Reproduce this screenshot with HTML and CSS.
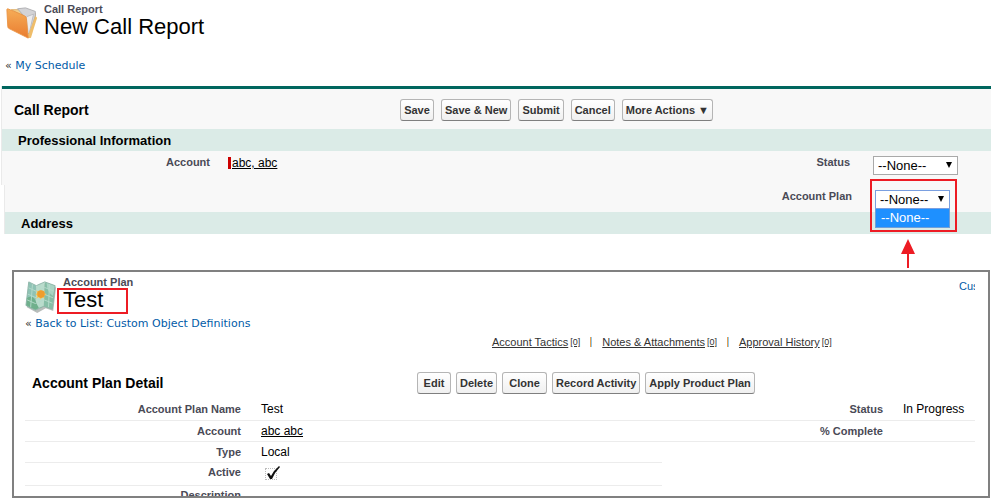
FILE: index.html
```html
<!doctype html>
<html lang="en">
<head>
<meta charset="UTF-8">
<title>New Call Report</title>
<meta name="viewport" content="width=device-width,initial-scale=1">
<link rel="stylesheet" href="styles.css">
</head>

<body>
<header class="page_title">
 <svg class="icon" width="32" height="32" viewBox="0 0 36 36" aria-hidden="true">
  <defs>
   <linearGradient id="folder" x1="0" y1="0" x2="0" y2="1">
    <stop offset="0" stop-color="#f6ad57"/>
    <stop offset="1" stop-color="#e97c30"/>
   </linearGradient>
  </defs>
  <path d="M6 3 L14 3 L33 7 L33 10 L27 34 L24 34 L20 10 Z" fill="#f3cf8d" stroke="#dcae66" stroke-width="1"/>
  <path d="M13 2 L22 1 L33 5 L33 10 L27 29 L23 31 L20 10 Z" fill="#d3d3d6" stroke="#aaaaae" stroke-width="1"/>
  <path d="M23 11 L31 8 L26 30" fill="#ececee" stroke="#b9b9bd" stroke-width="1"/>
  <path d="M33 10 L35 12 L28 35 L24 34 Z" fill="#efbd6a"/>
  <path d="M1 3 Q1 2 2 2 L21 10 Q23 11 23 13 L25 35 L3 24 Q2 23 2 22 Z" fill="url(#folder)" stroke="#e99242" stroke-width="1"/>
 </svg>
 <div>
  <p class="type">Call Report</p>
  <h1>New Call Report</h1>
 </div>
</header>
<p class="back_link">« <a href="#">My Schedule</a></p>

<form class="edit_page" onsubmit="return false">
 <div class="part">
  <div class="toolbar">
   <h2>Call Report</h2>
   <div class="buttons">
    <button>Save</button>
    <button>Save &amp; New</button>
    <button>Submit</button>
    <button>Cancel</button>
    <button>More Actions ▼</button>
   </div>
  </div>
  <h3>Professional Information</h3>
  <div class="fields">
   <span class="label">Account</span>
   <span class="value required"><a href="#">abc, abc</a></span>
   <label class="label" for="status">Status</label>
   <span class="picklist">
    <select id="status"><option>--None--</option></select>
   </span>
  </div>
 </div>

 <div class="part lower">
  <div class="fields">
   <label class="label plan" for="account_plan">Account Plan</label>
   <span class="picklist open">
    <select id="account_plan"><option>--None--</option></select>
    <span class="options">--None--</span>
    <span class="marker"></span>
    <svg class="arrow" width="16" height="30" viewBox="0 0 16 30" aria-hidden="true">
     <path d="M8 0 L15 15 H9 V29 H7 V15 H1 Z" fill="#ed1c24"/>
    </svg>
   </span>
  </div>
  <h3>Address</h3>
 </div>
</form>

<main class="detail_page">
 <header class="page_title">
  <svg class="icon" width="32" height="34" viewBox="0 0 34 36" aria-hidden="true">
   <path d="M5 5 L13 9 L22 4 L33 9 L30 34 L22 31 L13 36 L2 30 Z" fill="#b9bdbb"/>
   <path d="M4 3 L12 7 L11 33 L1 28 Z" fill="#8fc3b5"/>
   <path d="M12 7 L21 3 L20 29 L11 33 Z" fill="#b9dccc"/>
   <path d="M21 3 L32 7 L29 32 L20 29 Z" fill="#86bea6"/>
   <path d="M2 20 Q9 16 12 25 T19 29 L11 33 L1 28 Z" fill="#6fb08c"/>
   <path d="M23 4 Q23 14 30 18 L32 7 Z" fill="#a9d4c4"/>
   <path d="M3 9 L12 13 L21 9 L31 13 M3 16 L12 20 L20 16 L30 20 M2 22 L11 26 L20 22 L30 26 M8 5 L6 30 M16 5 L15 31 M26 5 L25 30" fill="none" stroke="#b5dacb" stroke-width="1"/>
   <path d="M4 3 L12 7 L21 3 L32 7 L29 32 L20 29 L11 33 L1 28 Z" fill="none" stroke="#8fb5a9" stroke-width="1"/>
   <path d="M17 11 L18 14 L21 12 L20 15 L23 16 L20 18 L21 21 L18 19 L17 22 L15 19 L12 21 L13 18 L11 16 L13 15 L12 12 L15 14 Z" fill="#f5c65b"/>
   <circle cx="17" cy="16" r="4" fill="#ef9d2c"/>
  </svg>
  <div>
   <p class="type">Account Plan</p>
   <h1><span class="marked">Test</span></h1>
  </div>
  <a class="customize" href="#">Cus</a>
 </header>
 <p class="back_link">« <a href="#">Back to List: Custom Object Definitions</a></p>

 <nav class="related">
  <a href="#">Account Tactics</a><a class="count" href="#">[0]</a>
  <i></i>
  <a href="#">Notes &amp; Attachments</a><a class="count" href="#">[0]</a>
  <i></i>
  <a href="#">Approval History</a><a class="count" href="#">[0]</a>
 </nav>

 <div class="toolbar">
  <h2>Account Plan Detail</h2>
  <div class="buttons">
   <button>Edit</button>
   <button>Delete</button>
   <button class="wide">Clone</button>
   <button>Record Activity</button>
   <button>Apply Product Plan</button>
  </div>
 </div>

 <table>
  <colgroup><col class="c_label"><col><col class="c_label2"><col class="c_value"></colgroup>
  <tr><th>Account Plan Name</th><td>Test</td><th>Status</th><td>In Progress</td></tr>
  <tr><th>Account</th><td><a href="#">abc abc</a></td><th>% Complete</th><td></td></tr>
  <tr><th>Type</th><td>Local</td></tr>
  <tr class="active">
   <th><label for="active">Active</label></th>
   <td>
    <span class="check">
     <input type="checkbox" id="active" checked disabled>
     <svg width="16" height="14" viewBox="0 0 16 14" aria-hidden="true">
      <path d="M2 8 L4 7 L6 10 Q9 4 14 0 L15 1 Q10 6 7 13 L5 13 Z" fill="#111"/>
     </svg>
    </span>
   </td>
  </tr>
  <tr class="cut"><th><div>Description</div></th></tr>
 </table>
</main>
</body>
</html>
```
FILE: styles.css
```css
* {
    box-sizing: border-box;
}
body {
    margin: 0;
    background: #fff;
    color: #000;
    font: 12px/16px "Liberation Sans", Arial, sans-serif;
}
h1, h2, h3, p {
    margin: 0;
}
a {
    color: #015ba7;
    text-decoration: none;
}

/* page titles */
.page_title {
    display: flex;
    gap: 6px;
    padding: 3px 0 0 6px;
}
.page_title .icon {
    margin-top: 4px;
}
.type {
    color: #4a4a56;
    font-size: 11px;
    font-weight: bold;
    line-height: 12px;
}
h1 {
    font-size: 22px;
    font-weight: normal;
    line-height: 24px;
}
.back_link {
    padding: 19px 0 0 5px;
    color: #333;
    font: 11px/16px "DejaVu Sans", Verdana, sans-serif;
}

/* toolbars */
.toolbar {
    display: flex;
    align-items: center;
    height: 40px;
    padding: 2px 0 0 12px;
}
h2 {
    width: 386px;
    font-size: 14px;
}
.buttons {
    display: flex;
    gap: 7px;
}
button {
    min-width: 34px;
    height: 22px;
    padding: 0 3px;
    border: 1px solid #b5b5b5;
    border-bottom-color: #7f7f7f;
    border-radius: 3px;
    background: linear-gradient(#fff, #f0f0f0);
    color: #333;
    font: bold 11px "Liberation Sans", Arial, sans-serif;
    white-space: nowrap;
}
button.wide {
    min-width: 45px;
}

/* edit page */
.edit_page {
    margin-top: 12px;
}
.part {
    margin-left: 2px;
    background: #f8f8f8;
    box-shadow: -1px 0 #eaeaea;
}
.part:first-child {
    border-top: 3px solid #00665e;
}
.lower {
    margin-left: 5px;
}
h3 {
    padding: 1px 0 0 16px;
    background: #dbebe7;
    font-size: 13px;
    line-height: 21px;
}
.fields {
    display: grid;
    grid-template-columns: 208px 1fr 140px 118px;
    height: 34px;
    padding-top: 3px;
}
.lower .fields {
    grid-template-columns: 208px 1fr 140px 116px;
    height: 27px;
}
.label {
    color: #4a4a56;
    font-size: 11px;
    font-weight: bold;
    text-align: right;
}
label.label {
    padding-right: 23px;
}
.plan {
    grid-column: 3;
}
.required {
    justify-self: start;
    height: 12px;
    margin: 3px 0 0 18px;
    padding-left: 1px;
    border-left: 3px solid #c00;
    line-height: 12px;
}
.required a, td a {
    color: #000;
    text-decoration: underline;
}
.picklist {
    position: relative;
    width: 85px;
    height: 19px;
    margin-top: 2px;
}
.picklist::after {
    content: "";
    position: absolute;
    top: 6px;
    right: 6px;
    border: 3px solid transparent;
    border-top: 6px solid #000;
    border-bottom: 0;
}
select {
    display: block;
    width: 100%;
    height: 19px;
    padding: 0 0 0 4px;
    appearance: none;
    border: 1px solid #a9a9a9;
    border-radius: 0;
    background: #fff;
    color: #000;
    font: 13px "Liberation Sans", Arial, sans-serif;
}
.open {
    width: 75px;
}
.open select {
    border-color: #7a9fe0;
}
.options {
    position: absolute;
    top: 19px;
    left: 0;
    width: 75px;
    height: 19px;
    padding-left: 5px;
    border: 1px solid #6f9fd8;
    border-top: 0;
    background: #1e90ff;
    color: #fff;
    font-size: 13px;
    line-height: 18px;
}
.marker {
    position: absolute;
    top: -11px;
    left: -5px;
    width: 87px;
    height: 53px;
    border: 2px solid #ed1c24;
}
.arrow {
    position: absolute;
    top: 49px;
    left: 25px;
}

/* detail page */
.detail_page {
    margin: 36px 1px 0 12px;
    padding: 0 13px 0 11px;
    border: 2px solid #808080;
}
.detail_page .page_title {
    padding: 4px 0 0;
}
.detail_page .icon {
    margin-top: 3px;
}
.marked {
    display: block;
    width: 71px;
    height: 26px;
    margin-left: -6px;
    padding-left: 4px;
    border: 2px solid #ed1c24;
    line-height: 20px;
}
.customize {
    width: 16px;
    margin: 2px 0 0 auto;
    overflow: hidden;
    font-size: 11px;
}
.detail_page .back_link {
    padding: 2px 0 0;
}
.related {
    display: flex;
    align-items: center;
    margin: 2px 0 0 467px;
    font-size: 11px;
}
.related a {
    color: #333;
    text-decoration: underline;
    white-space: nowrap;
}
.related .count {
    margin-left: 2px;
    font-size: 9px;
}
.related i {
    width: 2px;
    height: 10px;
    margin: 0 10px;
    border-left: 1px solid #e8a050;
    border-right: 1px solid #8cc8f0;
}
.detail_page .toolbar {
    height: 32px;
    margin-top: 17px;
    padding: 0 0 0 7px;
}
.detail_page h2 {
    width: 385px;
}
.detail_page .buttons {
    gap: 5px;
}
table {
    width: 100%;
    table-layout: fixed;
    border-collapse: collapse;
}
.c_label {
    width: 226px;
}
.c_label2 {
    width: 231px;
}
.c_value {
    width: 82px;
}
th, td {
    height: 21px;
    padding: 0 10px;
    border-bottom: 1px solid #ececec;
    white-space: nowrap;
    text-align: left;
}
th {
    color: #4a4a56;
    font-size: 11px;
    text-align: right;
}
.active th, .active td {
    height: 23px;
}
.active th {
    padding-bottom: 3px;
}
.check {
    position: relative;
    display: block;
    width: 12px;
    height: 12px;
    margin-left: 4px;
}
.check input {
    display: block;
    width: 12px;
    height: 12px;
    margin: 0;
    appearance: none;
    border: 1px dotted #bbb;
}
.check svg {
    position: absolute;
    top: -2px;
    left: 0;
}
/* last row is cut off by the frame */
.cut th {
    height: 10px;
    border: 0;
}
.cut div {
    height: 10px;
    padding-top: 1px;
    overflow: hidden;
}
```
